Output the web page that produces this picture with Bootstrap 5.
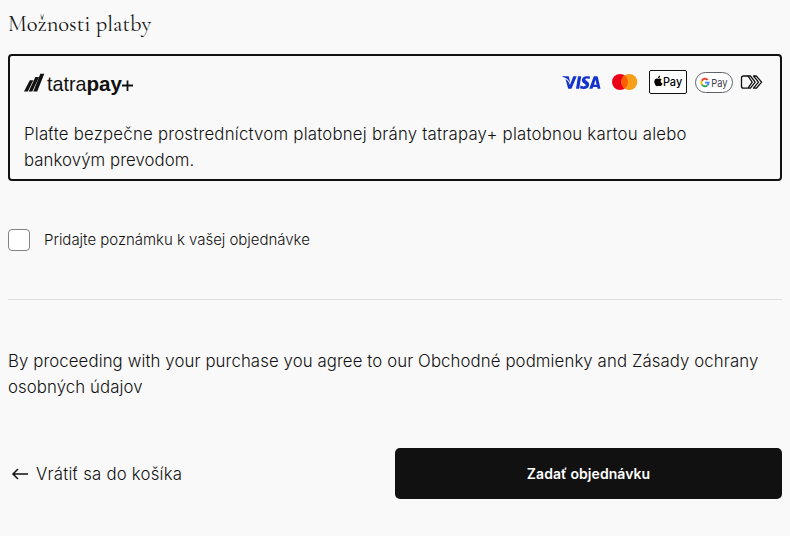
<!DOCTYPE html>
<html lang="sk">
<head>
<meta charset="utf-8">
<meta name="viewport" content="width=device-width, initial-scale=1">
<title>Možnosti platby</title>
<link href="https://cdn.jsdelivr.net/npm/bootstrap@5.3.0/dist/css/bootstrap.min.css" rel="stylesheet">
<style>
body{background:#f9f9f9;color:#111;font-family:Inter,"Liberation Sans",sans-serif;font-size:16.8px;font-weight:300;line-height:26px;overflow:hidden}
.checkout{padding:8px 8px 0}
.pay-title{font-family:"Cormorant Garamond","Liberation Serif",serif;font-size:22.5px;line-height:32px;font-weight:400;margin-bottom:14px;color:#111}
.pay-box{height:127px;border:2px solid #111;border-radius:4px;padding:12px 14px 0}
.pay-head{height:29px;margin-bottom:24px}
.pay-head svg{display:block;flex:none}
.pay-text{letter-spacing:.22px}
.pay-text span{letter-spacing:.06px}
.note-row{margin-top:48px;height:22px}
.note-row .form-check-input{width:22px;height:22px;margin:0 14px 0 0;border:1px solid #828282;border-radius:4px;background-color:#fff;flex:none}
.note-row label{font-size:15px;line-height:22px;letter-spacing:-.03px}
.divider{border-top:1px solid #dedede;margin-top:48px}
.terms{margin:48px 0;letter-spacing:.095px}
.actions{height:51px}
.back-link{color:#111;letter-spacing:.21px}
.order-btn{background:#111;color:#fff;border-radius:5px;font-size:14px;font-weight:600;border:0;height:51px;letter-spacing:.05px}
.order-btn:hover{background:#333;color:#fff}
</style>
<script src="https://cdn.jsdelivr.net/npm/bootstrap@5.3.0/dist/js/bootstrap.bundle.min.js"></script>
</head>
<body>
<main class="checkout">
  <h2 class="pay-title">Možnosti platby</h2>
  <section class="pay-box">
    <div class="pay-head d-flex justify-content-between">
      <svg width="112" height="29" viewBox="24 68 112 29" role="img" aria-label="tatrapay+">
        <g fill="#111"><path d="M24 91.600 29.800 80.300h3.500L27.800 91.600z"/><path d="M28.700 91.600 35.400 77h3.600L32.300 91.600z"/><path d="M33.300 91.600 40.300 73.800h4L37.200 91.600z"/></g>
        <g font-family="Liberation Sans, sans-serif" font-size="21" fill="#111"><text x="47" y="91" textLength="39.500" lengthAdjust="spacingAndGlyphs">tatra</text><text x="86.500" y="91" font-weight="700" textLength="35.500" lengthAdjust="spacingAndGlyphs">pay</text></g>
        <path d="M127.500 80.500v10.500M122 85.500h11" stroke="#111" stroke-width="1.800"/>
      </svg>
      <svg width="204" height="29" viewBox="562 68 204 29" role="img" aria-label="Visa, Mastercard, Apple Pay, Google Pay">
        <g fill="#1434cb"><path d="M562.300 76.300h5.300c.8 0 1.300.3 1.500 1.100l1.200 5.900c-1.300-3.300-4-5.600-8-6.500z"/><path d="M576.700 76.300 571.500 88.800h-3.300l-2.700-9.700c1.800 1.200 3.200 2.800 3.900 4.700l.5 1.200 3.400-8.700z"/><path d="M578 76.300h3.200l-2 12.500H576z"/><path d="M590 76.600l-.5 2.500c-1.900-.8-4.200-.7-4.200.5 0 1.300 3.800 1.700 3.800 4.800 0 4.700-5.800 5.300-9.100 3.900l.5-2.700c2.200 1.200 5.200 1 5.200-.4 0-1.500-3.800-1.700-3.800-4.900 0-3.800 4.700-4.900 8.100-3.700z"/><path fill-rule="evenodd" d="M594.200 76.300h2.700c.6 0 .9.300 1 .9l2.600 11.600h-2.900l-.4-1.800h-4l-.7 1.800H589.300l4.100-11.500c.1-.7.3-1 .8-1zM595.500 79.800l-1.500 4.900h2.600z"/></g>
        <circle cx="620" cy="82" r="8" fill="#eb001b"/><circle cx="629.300" cy="82" r="8" fill="#f79e1b"/><path d="M624.650 75.500a8 8 0 0 1 0 13 8 8 0 0 1 0-13z" fill="#ff5f00"/>
        <rect x="649.500" y="70.500" width="37" height="23" rx="1.500" fill="#fff" stroke="#111"/>
        <path d="M661.500 79.500c-.9-1.200-2.200-1.200-3.100-.6-1-.4-2.500-.6-3.500.7-1.700 2.500.7 6.800 2.300 6.600l1.300-.4 1.700.4c1 0 2.100-1.600 2.400-2.600-2-.8-2.600-3-1.100-4.100zM658 78.300c-.1-1.500.8-2.600 2.100-2.800.1 1.500-.8 2.700-2.100 2.800z" fill="#000"/>
        <text x="662.900" y="86" font-family="Inter, sans-serif" font-weight="500" font-size="11.500" fill="#000" textLength="19.300" lengthAdjust="spacingAndGlyphs">Pay</text>
        <rect x="695.500" y="72.500" width="37" height="20" rx="10" fill="#fff" stroke="#5f6368"/>
        <g fill="none" stroke-width="1.900"><path d="M707.800 79.900a3.700 3.700 0 0 0-6 .8" stroke="#ea4335"/><path d="M701.800 80.700a3.800 3.800 0 0 0 0 3.700" stroke="#fbbc04"/><path d="M701.800 84.400a3.700 3.700 0 0 0 5.600 1" stroke="#34a853"/><path d="M707.400 85.400a3.700 3.700 0 0 0 1.200-2.800H705" stroke="#4285f4"/></g>
        <text x="711.200" y="86.800" font-family="Inter, sans-serif" font-weight="400" font-size="11" fill="#3c4043" textLength="16.300" lengthAdjust="spacingAndGlyphs">Pay</text>
        <g fill="none" stroke="#111" stroke-width="1.300" stroke-linejoin="round"><path d="M748 76h-4.500a2 2 0 0 0-2 2v8.200a2 2 0 0 0 2 2h4"/><path d="M748 76l4.200 6.100-4.200 6.100h2.400l4.800-6.100-4.800-6.100z"/><path d="M753.500 76h2.800l5.300 6.100-5.300 6.100h-2.800l5-6.100z"/></g>
      </svg>
    </div>
    <p class="pay-text mb-0">Plaťte bezpečne prostredníctvom platobnej brány tatrapay+ platobnou kartou alebo<br><span>bankovým prevodom.</span></p>
  </section>
  <div class="note-row d-flex align-items-center">
    <input class="form-check-input" type="checkbox" id="order-note">
    <label for="order-note">Pridajte poznámku k vašej objednávke</label>
  </div>
  <div class="divider"></div>
  <p class="terms">By proceeding with your purchase you agree to our Obchodné podmienky and Zásady ochrany<br>osobných údajov</p>
  <div class="actions row g-0 align-items-center">
    <div class="col-6 d-flex align-items-center">
      <a href="#" class="back-link d-flex align-items-center text-decoration-none">
        <svg class="flex-shrink-0" width="28" height="24" viewBox="8 462 28 24" aria-hidden="true"><path d="M28 474H13M18 469l-5 5 5 5" fill="none" stroke="#111" stroke-width="1.500"/></svg>
        <span>Vrátiť sa do košíka</span>
      </a>
    </div>
    <div class="col-6"><button type="button" class="btn order-btn w-100">Zadať objednávku</button></div>
  </div>
</main>
</body>
</html>
